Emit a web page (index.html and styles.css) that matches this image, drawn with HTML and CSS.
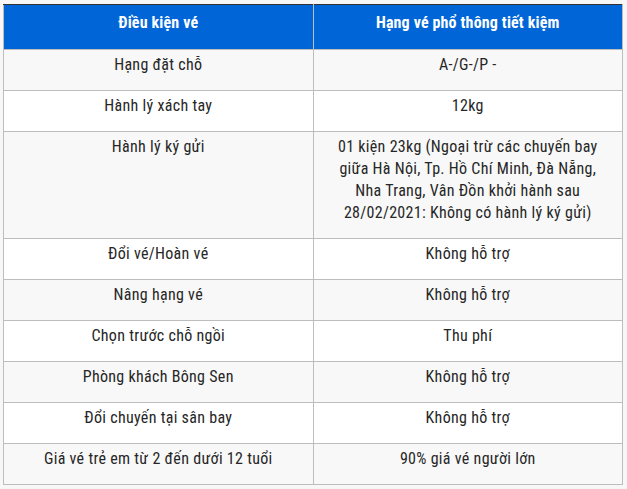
FILE: index.html
```html
<!DOCTYPE html>
<html lang="vi">
<head>
<meta charset="utf-8">
<link rel="stylesheet" href="styles.css">
</head>
<body>
<table class="fare">
  <thead>
    <tr><th>Điều kiện vé</th><th>Hạng vé phổ thông tiết kiệm</th></tr>
  </thead>
  <tbody>
    <tr><td>Hạng đặt chỗ</td><td>A-/G-/P -</td></tr>
    <tr><td>Hành lý xách tay</td><td>12kg</td></tr>
    <tr><td>Hành lý ký gửi</td><td>01 kiện 23kg (Ngoại trừ các chuyến bay<br>giữa Hà Nội, Tp. Hồ Chí Minh, Đà Nẵng,<br>Nha Trang, Vân Đồn khởi hành sau<br>28/02/2021: Không có hành lý ký gửi)</td></tr>
    <tr><td>Đổi vé/Hoàn vé</td><td>Không hỗ trợ</td></tr>
    <tr><td>Nâng hạng vé</td><td>Không hỗ trợ</td></tr>
    <tr><td>Chọn trước chỗ ngồi</td><td>Thu phí</td></tr>
    <tr><td>Phòng khách Bông Sen</td><td>Không hỗ trợ</td></tr>
    <tr><td>Đổi chuyến tại sân bay</td><td>Không hỗ trợ</td></tr>
    <tr><td>Giá vé trẻ em từ 2 đến dưới 12 tuổi</td><td>90% giá vé người lớn</td></tr>
  </tbody>
</table>
</body>
</html>
```
FILE: styles.css
```css
html, body {
  margin: 0;
  background: #f7f7f7;
}
body {
  padding: 4px 0 0 3px;
  font-family: "Roboto Condensed", "Liberation Sans Narrow", Roboto, sans-serif;
  font-stretch: condensed;
  font-size: 16px;
  color: #262626;
}
.fare {
  width: 620px;
  border-collapse: collapse;
  table-layout: fixed;
}
.fare th, .fare td {
  width: 50%;
  text-align: center;
  vertical-align: top;
  border: 1px solid #bdbdbd;
  line-height: 22px;
  padding: 4px 8px 14px;
}
.fare td {
  letter-spacing: 0.3px;
}
.fare th {
  background: #0066d8;
  color: #fff;
  font-weight: 700;
  letter-spacing: 0.15px;
  padding: 7px 8px 15px;
  border-top: 1px solid #333;
}
.fare tbody tr:nth-child(odd) td {
  background: #f8f8f8;
}
.fare tbody tr:nth-child(even) td {
  background: #fff;
}
```
